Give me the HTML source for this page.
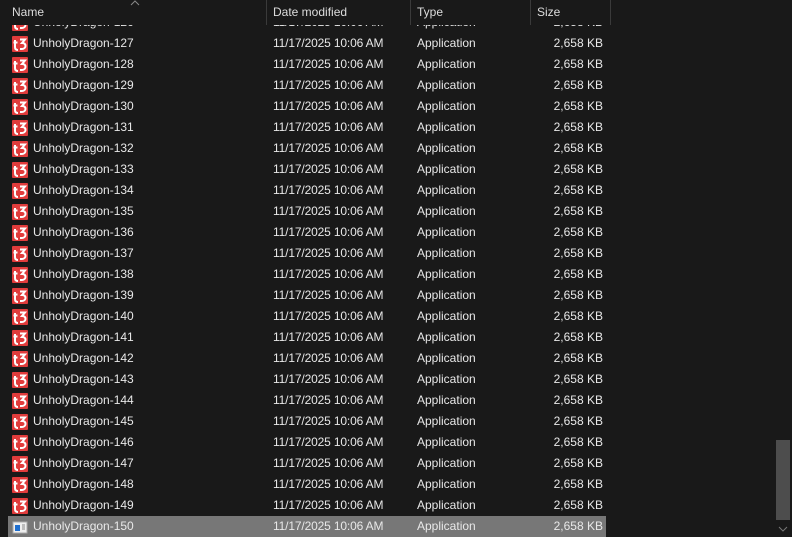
<!DOCTYPE html>
<html><head><style>
body{margin:0;width:792px;height:536px;background:#191919;overflow:hidden;font-family:"Liberation Sans",sans-serif;font-size:12px;color:#e8e8e8;position:relative}
.row{position:absolute;left:8px;width:598px;height:21px;line-height:21px}
.row span{position:absolute;white-space:nowrap}
.n{left:25px}.d{left:265px;letter-spacing:-0.15px}.t{left:409px}.s{right:3px}
.ic{position:absolute;left:4px;top:3px;width:16px;height:16px}
.sel{background:#777}
.hdr{position:absolute;left:0;top:0;width:792px;height:25px;background:#191919;z-index:2}
.hdr span{position:absolute;top:5px;color:#dcdcdc}
.sep{position:absolute;top:0;width:1px;height:25px;background:#3a3a3a}
</style></head><body>
<div class="hdr">
<span style="left:12px">Name</span>
<svg style="position:absolute;left:130px;top:0" width="10" height="6"><path d="M1 5 L5 1 L9 5" stroke="#888" fill="none"/></svg>
<div class="sep" style="left:266px"></div><span style="left:273px">Date modified</span>
<div class="sep" style="left:410px"></div><span style="left:417px">Type</span>
<div class="sep" style="left:530px"></div><span style="left:537px">Size</span>
<div class="sep" style="left:610px"></div>
</div>
<div style="position:absolute;left:776px;top:440px;width:14px;height:80px;background:#4d4d4d"></div>
<svg style="position:absolute;left:778px;top:525px" width="10" height="8"><path d="M1 2 L5 6 L9 2" stroke="#777" fill="none"/></svg>
<div id="rows"></div>
<script>
var h='';
for(var i=126;i<=150;i++){
 var y=12+(i-126)*21;
 var sel=i==150;
 var icon=sel?'<svg class="ic" viewBox="0 0 16 16"><rect x="1" y="3" width="14" height="11" fill="#eee" stroke="#aaa"/><rect x="3" y="6" width="5" height="6" fill="#1e6fd0"/><path d="M10 6h3M10 8h3M10 10h3" stroke="#888"/></svg>'
 :'<svg class="ic" viewBox="0 0 16 16"><rect x="0" y="0" width="16" height="16" rx="1" fill="#e03c3c"/><path d="M3 4v7c0 2 1 3 3 3M1.5 6.5h4" stroke="#fff" stroke-width="2" fill="none"/><path d="M8 3.5h5l-3 3.5c3 0 3.5 1.5 3.5 3s-1.5 3-3.5 3h-2" stroke="#fff" stroke-width="2" fill="none"/></svg>';
 h+='<div class="row'+(sel?' sel':'')+'" style="top:'+y+'px">'+icon+'<span class="n">UnholyDragon-'+i+'</span><span class="d">11/17/2025 10:06 AM</span><span class="t">Application</span><span class="s">2,658 KB</span></div>';
}
document.getElementById('rows').innerHTML=h;
</script>
</body></html>
